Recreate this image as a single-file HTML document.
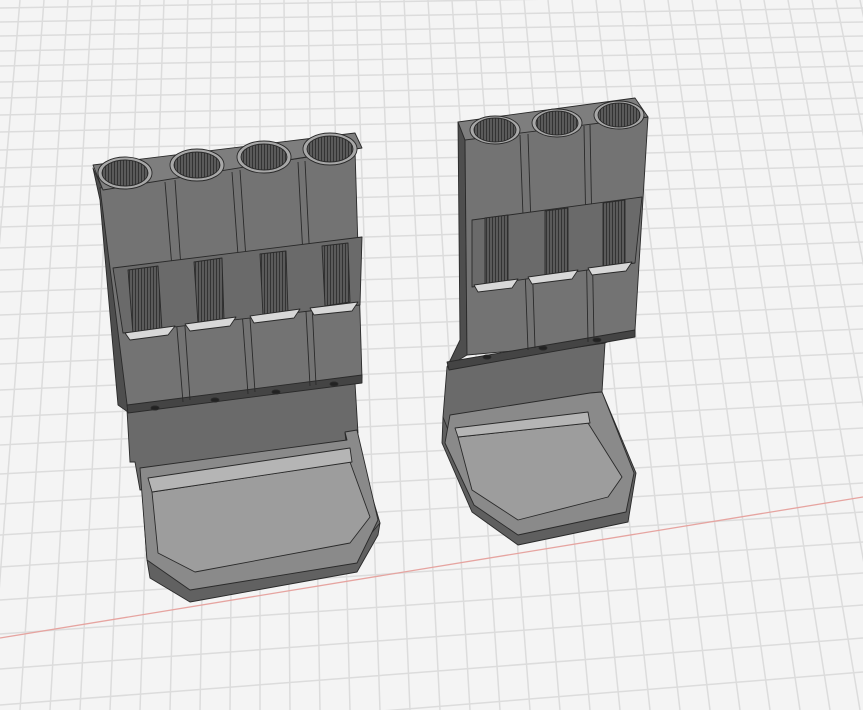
<!DOCTYPE html>
<html><head><meta charset="utf-8"><style>
html,body{margin:0;padding:0;width:863px;height:710px;overflow:hidden;background:#f4f4f4}
svg{display:block}
</style></head><body>
<svg width="863" height="710" viewBox="0 0 863 710" xmlns="http://www.w3.org/2000/svg">
<defs>
<pattern id="rib" width="3" height="10" patternUnits="userSpaceOnUse"><rect width="3" height="10" fill="#5a5a5a"/><rect width="1" height="10" fill="#333"/></pattern>
</defs>
<rect width="863" height="710" fill="#f4f4f4"/>
<g stroke="#dcdcdc" stroke-width="1.5" fill="none">
<path d="M0,8 L863,-6 M0,22 L863,8 M0,36 L863,22 M0,51 L863,36 M0,66 L863,51 M0,82 L863,66 M0,98 L863,82 M0,115 L863,98 M0,132 L863,114 M0,150 L863,131 M0,168 L863,148 M0,187 L863,166 M0,207 L863,184 M0,227 L863,203 M0,248 L863,222 M0,270 L863,242 M0,292 L863,263 M0,315 L863,284 M0,339 L863,306 M0,364 L863,329 M0,390 L863,353 M0,417 L863,377 M0,445 L863,402 M0,474 L863,428 M0,504 L863,455 M0,535 L863,483 M0,567 L863,512 M0,600 L863,542 M0,634 L863,573 M0,669 L863,605 M0,705 L863,638 M0,742 L863,672"/>
<path d="M-40,710 L20,0 M-10,710 L44,0 M20,710 L68,0 M50,710 L92,0 M80,710 L116,0 M110,710 L140,0 M140,710 L164,0 M170,710 L188,0 M200,710 L212,0 M230,710 L236,0 M260,710 L260,0 M290,710 L284,0 M320,710 L308,0 M350,710 L332,0 M380,710 L356,0 M410,710 L380,0 M440,710 L404,0 M470,710 L428,0 M500,710 L452,0 M530,710 L476,0 M560,710 L500,0 M590,710 L524,0 M620,710 L548,0 M650,710 L572,0 M680,710 L596,0 M710,710 L620,0 M740,710 L644,0 M770,710 L668,0 M800,710 L692,0 M830,710 L716,0 M860,710 L740,0 M890,710 L764,0 M920,710 L788,0 M950,710 L812,0 M980,710 L836,0 M1010,710 L860,0"/>
</g>
<path d="M0,638 L863,497" stroke="#e6a4a0" stroke-width="1.3"/>

<g stroke="#2a2a2a" stroke-width="0.9" stroke-linejoin="round">
<!-- LEFT OBJECT -->
<polygon points="130,462 140,462 147,560 190,598 357,566 380,523 360,456 357,430 345,433 350,460" fill="#6d6d6d"/>
<polygon points="147,560 190,580 357,550 380,523 378,535 357,572 190,602 150,578" fill="#616161"/>
<polygon points="127,410 355,383 358,433 345,433 348,458 140,490 135,462 130,462" fill="#6a6a6a"/>
<polygon points="140,468 347,440 345,432 357,430 378,520 357,563 190,590 147,560" fill="#8a8a8a"/>
<polygon points="152,492 350,462 370,517 350,543 195,572 158,553" fill="#9d9d9d"/>
<polygon points="148,478 350,448 352,462 152,492" fill="#b5b5b5"/>
<polygon points="93,168 103,190 128,412 118,405 100,200" fill="#4e4e4e"/>
<polygon points="100,188 355,150 362,378 128,412" fill="#737373"/>
<polygon points="93,165 355,133 362,148 103,190" fill="#7e7e7e"/>
<polygon points="127,405 362,375 362,383 128,413" fill="#444"/>
<path d="M165,182 L183,402 M175,180 L190,400 M232,172 L248,394 M240,170 L255,392 M298,162 L310,386 M305,161 L316,385" fill="none"/>
<polygon points="113,268 362,237 360,305 123,333" fill="#6a6a6a"/>
<polygon points="128,270 158,266 162,330 133,334" fill="url(#rib)"/>
<polygon points="194,262 222,258 224,320 198,324" fill="url(#rib)"/>
<polygon points="260,254 286,251 288,312 263,316" fill="url(#rib)"/>
<polygon points="322,246 348,243 350,302 325,306" fill="url(#rib)"/>
<polygon points="125,333 175,326 168,335 130,340" fill="#d8d8d8"/>
<polygon points="185,324 236,317 230,326 190,331" fill="#d8d8d8"/>
<polygon points="250,316 300,309 294,318 254,323" fill="#d8d8d8"/>
<polygon points="310,308 358,302 352,311 314,315" fill="#d8d8d8"/>
<ellipse cx="125" cy="173" rx="27" ry="16" fill="#a8a8a8"/><ellipse cx="125" cy="173" rx="23" ry="13" fill="url(#rib)"/>
<ellipse cx="197" cy="165" rx="27" ry="16" fill="#a8a8a8"/><ellipse cx="197" cy="165" rx="23" ry="13" fill="url(#rib)"/>
<ellipse cx="264" cy="157" rx="27" ry="16" fill="#a8a8a8"/><ellipse cx="264" cy="157" rx="23" ry="13" fill="url(#rib)"/>
<ellipse cx="330" cy="149" rx="27" ry="16" fill="#a8a8a8"/><ellipse cx="330" cy="149" rx="23" ry="13" fill="url(#rib)"/>
<ellipse cx="155" cy="408" rx="4" ry="2" fill="#222"/><ellipse cx="215" cy="400" rx="4" ry="2" fill="#222"/><ellipse cx="276" cy="392" rx="4" ry="2" fill="#222"/><ellipse cx="334" cy="384" rx="4" ry="2" fill="#222"/>

<!-- RIGHT OBJECT -->
<polygon points="443,417 442,443 472,512 518,545 628,522 636,473 602,392 590,393 600,420" fill="#5f5f5f"/>
<polygon points="447,367 605,343 602,392 590,393 595,420 452,440 443,417" fill="#6a6a6a"/>
<polygon points="450,415 590,393 602,392 634,473 626,512 518,535 474,505 445,443" fill="#8a8a8a"/>
<polygon points="458,437 588,423 622,477 608,497 518,520 472,490" fill="#9d9d9d"/>
<polygon points="455,428 588,412 590,423 458,437" fill="#b5b5b5"/>
<polygon points="458,122 465,140 467,355 447,367 460,340" fill="#4e4e4e"/>
<polygon points="465,138 648,117 635,330 605,343 467,355" fill="#737373"/>
<polygon points="458,122 635,98 648,117 465,140" fill="#7e7e7e"/>
<polygon points="447,362 635,330 635,337 449,370" fill="#444"/>
<path d="M520,135 L528,350 M528,134 L535,348 M584,126 L588,342 M590,125 L594,341" fill="none"/>
<polygon points="472,220 642,197 635,263 472,287" fill="#6a6a6a"/>
<polygon points="485,218 508,215 508,283 485,286" fill="url(#rib)"/>
<polygon points="545,211 568,208 568,275 545,278" fill="url(#rib)"/>
<polygon points="603,203 625,200 625,267 603,270" fill="url(#rib)"/>
<polygon points="474,285 518,279 512,288 478,292" fill="#d8d8d8"/>
<polygon points="528,277 578,270 572,279 532,284" fill="#d8d8d8"/>
<polygon points="588,268 632,262 626,271 592,275" fill="#d8d8d8"/>
<ellipse cx="495" cy="130" rx="25" ry="14" fill="#a8a8a8"/><ellipse cx="495" cy="130" rx="21" ry="12" fill="url(#rib)"/>
<ellipse cx="557" cy="123" rx="25" ry="14" fill="#a8a8a8"/><ellipse cx="557" cy="123" rx="21" ry="12" fill="url(#rib)"/>
<ellipse cx="619" cy="115" rx="25" ry="14" fill="#a8a8a8"/><ellipse cx="619" cy="115" rx="21" ry="12" fill="url(#rib)"/>
<ellipse cx="487" cy="357" rx="4" ry="2" fill="#222"/><ellipse cx="543" cy="348" rx="4" ry="2" fill="#222"/><ellipse cx="597" cy="340" rx="4" ry="2" fill="#222"/>
</g>
</svg>
</body></html>
